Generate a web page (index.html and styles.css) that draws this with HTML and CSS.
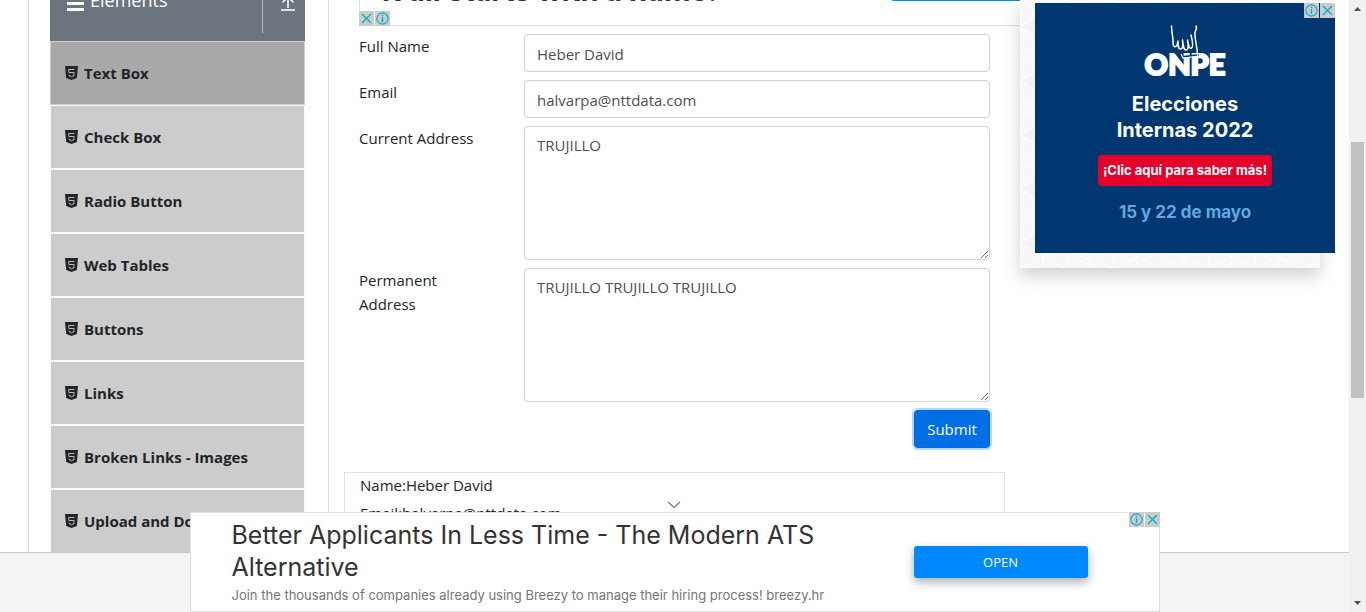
FILE: index.html
```html
<!DOCTYPE html>
<html lang="en">
<head>
<meta charset="utf-8">
<title>Text Box</title>
<link rel="stylesheet" href="styles.css">
</head>
<body>
<svg class="sprite" aria-hidden="true">
  <symbol id="html5" viewBox="0 0 13 14">
    <path fill="#212529" d="M0 0h13l-1.100 12L6.500 14 1.100 12z"/>
    <path fill="none" stroke="#bbb" stroke-width="1" d="M9.500 3.500H3.600l.3 3h5.200l-.3 3.300-2.300.8-2.300-.8-.1-1.100"/>
  </symbol>
  <symbol id="info" viewBox="0 0 15 15">
    <circle cx="7.500" cy="7.500" r="5.600" fill="none" stroke="#00aecd" stroke-width="1.100"/>
    <path d="M7.500 6.300v4.700M7.500 3.800v1.400" stroke="#00aecd" stroke-width="1.500"/>
  </symbol>
  <symbol id="close" viewBox="0 0 15 15">
    <path d="M3 3l9 9M12 3l-9 9" stroke="#00aecd" stroke-width="1.300"/>
  </symbol>
</svg>

<div class="viewport">
  <div class="page">
    <nav class="sidebar">
      <div class="group-head">
        <svg class="bars" viewBox="0 0 18 16"><path d="M0 2.500h17M0 8.500h17M0 14.500h17" stroke="#fff" stroke-width="3"/></svg>
        <span class="group-title">Elements</span>
        <button class="collapse" aria-label="Collapse group"><svg viewBox="0 0 16 20"><path d="M8 17V6M2.500 11.500L8 6l5.500 5.500M1 19h14" fill="none" stroke="#fff" stroke-width="1.600"/></svg></button>
      </div>
      <ul class="menu">
        <li><a class="item active" href="#"><svg class="ico"><use href="#html5"/></svg>Text Box</a></li>
        <li><a class="item" href="#"><svg class="ico"><use href="#html5"/></svg>Check Box</a></li>
        <li><a class="item" href="#"><svg class="ico"><use href="#html5"/></svg>Radio Button</a></li>
        <li><a class="item" href="#"><svg class="ico"><use href="#html5"/></svg>Web Tables</a></li>
        <li><a class="item" href="#"><svg class="ico"><use href="#html5"/></svg>Buttons</a></li>
        <li><a class="item" href="#"><svg class="ico"><use href="#html5"/></svg>Links</a></li>
        <li><a class="item" href="#"><svg class="ico"><use href="#html5"/></svg>Broken Links - Images</a></li>
        <li><a class="item" href="#"><svg class="ico"><use href="#html5"/></svg>Upload and Download</a></li>
      </ul>
    </nav>

    <main class="main">
      <div class="top-ad">
        <div class="top-ad-title">It all starts with a name.</div>
        <div class="top-ad-cta"></div>
        <div class="choices choices-left">
          <button aria-label="Close ad"><svg><use href="#close"/></svg></button>
          <button aria-label="Ad information"><svg><use href="#info"/></svg></button>
        </div>
      </div>
      <form class="form" onsubmit="return false">
        <label for="name">Full Name</label>
        <input id="name" type="text" value="Heber David">
        <label for="email">Email</label>
        <input id="email" type="email" value="halvarpa@nttdata.com">
        <label for="current">Current Address</label>
        <textarea id="current" rows="5">TRUJILLO</textarea>
        <label for="permanent">Permanent Address</label>
        <textarea id="permanent" rows="5">TRUJILLO TRUJILLO TRUJILLO</textarea>
        <button class="submit" type="submit">Submit</button>
      </form>
      <div class="output">
        <p>Name:Heber David</p>
        <p>Email:halvarpa@nttdata.com</p>
      </div>
    </main>

    <aside class="aside">
      <div class="panel">
        <svg class="texture" aria-hidden="true">
          <defs><pattern id="tri" width="47" height="54" patternUnits="userSpaceOnUse">
            <path fill="#f3f3f3" d="M0 27l23-14v28zM47 0L24 13 47 27z"/>
            <path fill="none" stroke="#fff" d="M0 0l47 27L0 54M47 0L0 27l47 27M23 0v54M0 0v54"/>
          </pattern></defs>
          <rect width="100%" height="100%" fill="url(#tri)"/>
        </svg>
        <div class="onpe">
          <div class="choices">
            <button aria-label="Ad information"><svg><use href="#info"/></svg></button>
            <button aria-label="Close ad"><svg><use href="#close"/></svg></button>
          </div>
          <svg class="logo" viewBox="0 0 84 54" role="img" aria-label="ONPE">
            <text x="42" y="50" text-anchor="middle" class="logo-text">ONPE</text>
            <path d="M39 32l17-2" stroke="#003770" stroke-width="2"/>
            <path d="M28.500 1c0 7 2 12 1.500 17 0 4 2.500 5 4 2l1-4c0 5 0 8 2.500 8s2.500-3 2-9c1 6 1 10 3.500 10s2.500-4 1.500-10c1 6 2 9 4 8s1-7-.5-13M53 1c2 3-2 5-1 9 0 5 2 10 2.500 20" fill="none" stroke="#fff" stroke-width="1.500" stroke-linecap="round" stroke-linejoin="round"/>
            <path d="M38 29l2 4 16-2" fill="none" stroke="#fff" stroke-width="1.200"/>
          </svg>
          <div class="onpe-title">Elecciones<br>Internas 2022</div>
          <a class="onpe-cta" href="#">¡Clic aquí para saber más!</a>
          <div class="onpe-date">15 y 22 de mayo</div>
        </div>
      </div>
    </aside>
  </div>
  <footer class="footer"></footer>

  <section class="anchor-ad">
    <button class="hide" aria-label="Hide ad"><svg viewBox="0 0 14 8"><path d="M1 1l6 5.500L13 1" fill="none" stroke="#777" stroke-width="1.200"/></svg></button>
    <div class="anchor-copy">
      <div class="anchor-title">Better Applicants In Less Time - The Modern ATS Alternative</div>
      <div class="anchor-text">Join the thousands of companies already using Breezy to manage their hiring process! breezy.hr</div>
    </div>
    <a class="open" href="#">OPEN</a>
    <div class="choices choices-edge">
      <button aria-label="Ad information"><svg><use href="#info"/></svg></button>
      <button aria-label="Close ad"><svg><use href="#close"/></svg></button>
    </div>
  </section>
</div>

<div class="scrollbar" aria-hidden="true">
  <svg class="arrow" viewBox="0 0 17 17"><path fill="#505050" d="M5 11l3.500-4 3.500 4z"/></svg>
  <div class="track"><div class="thumb"></div></div>
  <svg class="arrow" viewBox="0 0 17 17"><path fill="#505050" d="M5 6l3.500 4L12 6z"/></svg>
</div>
</body>
</html>
```

FILE: styles.css
```css
* { box-sizing: border-box; }
body {
  margin: 0;
  display: flex;
  height: 100vh;
  overflow: hidden;
  background: #fff;
  color: #212529;
  font: 15px/24px "Open Sans", "Noto Sans", sans-serif;
}
button { padding: 0; border: 0; background: none; font: inherit; cursor: pointer; }
a { text-decoration: none; }
svg { display: block; }
.sprite { position: absolute; width: 0; height: 0; }

.viewport {
  position: relative;
  flex: 1;
  min-width: 0;
  display: flex;
  flex-direction: column;
}
.page {
  flex: 1;
  min-height: 0;
  display: flex;
  overflow: hidden;
  padding-left: 28px;
}
.footer { height: 60px; background: #f4f4f4; border-top: 1px solid #c8c8c8; }

/* Sidebar */
.sidebar {
  flex: none;
  width: 300px;
  padding: 0 23px 0 21px;
  border-left: 1px solid #dcdcdc;
}
.group-head {
  display: flex;
  align-items: flex-end;
  height: 41px;
  padding: 0 9px 8px 17px;
  background: #6c757d;
  color: #fff;
}
.bars { width: 18px; height: 16px; margin-bottom: 22px; }
.group-title { flex: 1; margin: 0 0 21px 5px; font-size: 18px; }
.collapse {
  display: flex;
  align-items: flex-end;
  height: 48px;
  padding: 0 0 22px 17px;
  border-left: 1px solid #b5babe;
}
.collapse svg { width: 16px; height: 20px; }
.menu { margin: 0; padding: 0; list-style: none; }
.item {
  display: flex;
  align-items: center;
  gap: 6px;
  height: 64px;
  padding: 0 14px;
  border: 1px solid #f8f9fa;
  background: #ccc;
  color: #212529;
  font-weight: 700;
}
.item.active { background: #a9a9a9; border-color: #c9cfd9; }
.ico { width: 13px; height: 14px; }

/* Main column */
.main { flex: 1; min-width: 0; border-left: 1px solid #dcdcdc; }
.top-ad {
  position: relative;
  display: flex;
  align-items: flex-end;
  justify-content: space-between;
  height: 26px;
  margin-left: 30px;
  padding: 0 0 24px 22px;
  border: solid #e0e0e0;
  border-width: 0 0 1px 1px;
}
.top-ad-title { margin-bottom: -6px; color: #333; font: 700 29px/32px Inter, sans-serif; }
.top-ad-cta { width: 129px; height: 32px; border-radius: 0 0 0 3px; background: #08f; }
.form {
  display: grid;
  grid-template-columns: 135px 1fr;
  gap: 8px 30px;
  padding: 8px 30px 0;
}
input, textarea {
  width: 100%;
  padding: 6px 12px;
  border: 1px solid #ced4da;
  border-radius: 4px;
  background: #fff;
  color: #495057;
  font: inherit;
}
input { height: 38px; padding-top: 8px; }
textarea { display: block; height: 134px; resize: vertical; }
.submit {
  grid-column: 2;
  justify-self: end;
  width: 76px;
  height: 38px;
  border: 1px solid #0069e2;
  border-radius: 4px;
  background: #006fe6;
  color: #fff;
  box-shadow: 0 0 0 2px #b3d7ff;
}
.output {
  height: 170px;
  margin: 24px 15px 0;
  padding: 0 15px;
  border: 1px solid #dee2e6;
}
.output p { margin: 0 0 4px; }

/* Side panel */
.aside { position: relative; z-index: 1; flex: none; width: 329px; }
.panel {
  position: relative;
  width: 300px;
  height: 268px;
  padding: 3px 0 0 15px;
  background: #f8f8f8;
  box-shadow: 0 8px 16px rgba(0, 0, 0, .18);
}
.texture { position: absolute; inset: 0; width: 100%; height: 100%; }
.onpe {
  position: relative;
  display: flex;
  flex-direction: column;
  align-items: center;
  width: 300px;
  height: 250px;
  padding-top: 22px;
  background: #003770;
  color: #fff;
  font: 700 20px/26px Inter, sans-serif;
  text-align: center;
}
.logo { width: 84px; height: 54px; }
.logo-text { font: 900 29px Lato, sans-serif; fill: #fff; stroke: #fff; stroke-width: 2; }
.onpe-title { margin: 12px 0; }
.onpe-cta {
  padding: 0 5px;
  border-radius: 4px;
  background: #e4002b;
  color: #fff;
  font-size: 13px;
  line-height: 31px;
}
.onpe-date { margin-top: 13px; color: #62a8e0; font-size: 17px; }

/* Ad controls */
.choices { position: absolute; top: 0; right: 0; display: flex; gap: 1px; }
.choices-left { top: 11px; right: auto; left: -1px; }
.choices-edge { top: -1px; right: -1px; }
.choices button, .choices svg { width: 15px; height: 15px; }
.choices button { background: #ccc; }

/* Anchor ad */
.anchor-ad {
  position: absolute;
  z-index: 2;
  bottom: 0;
  left: 0;
  right: 0;
  display: flex;
  align-items: center;
  width: 970px;
  height: 100px;
  margin: 0 auto;
  padding: 0 71px 0 41px;
  border: 1px solid #e0e0e0;
  background: #fff;
}
.anchor-copy { flex: 1; padding-top: 2px; font-family: Inter, sans-serif; }
.anchor-title { width: 620px; font-size: 25px; line-height: 32px; color: #333; }
.anchor-text { font-size: 13px; color: #757575; }
.open {
  width: 174px;
  border-radius: 3px;
  background: #08f;
  color: #fff;
  font: 13px/32px "Open Sans", sans-serif;
  text-align: center;
  box-shadow: 0 4px 10px rgba(40, 50, 80, .4);
}
.hide { position: absolute; top: -12px; left: 476px; }
.hide svg { width: 14px; height: 8px; }

/* Scrollbar */
.scrollbar { flex: none; display: flex; flex-direction: column; width: 17px; background: #f1f1f1; }
.arrow { width: 17px; height: 17px; }
.track { flex: 1; padding: 125px 2px 0; }
.thumb { height: 256px; background: #c1c1c1; }
```
